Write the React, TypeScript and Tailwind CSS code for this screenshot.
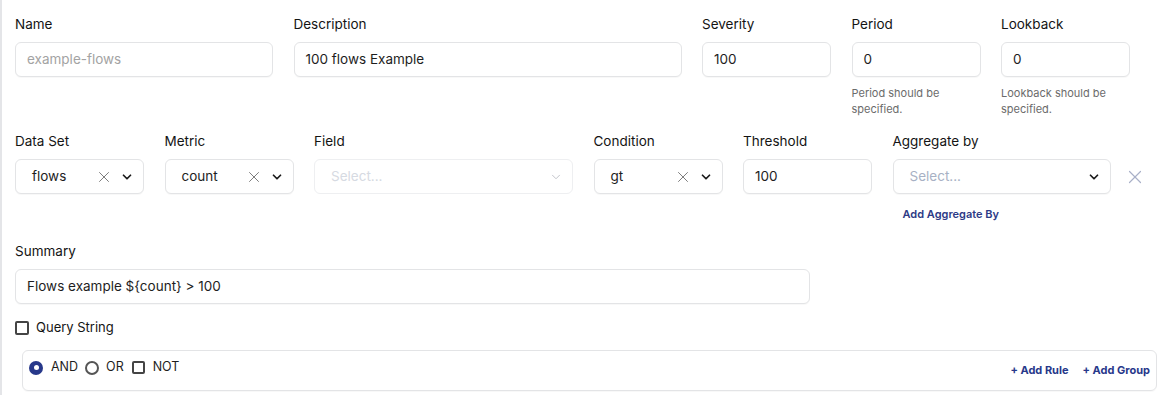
import { X, ChevronDown } from "lucide-react";

function Label({ children }: { children: React.ReactNode }) {
  return <div className="mb-2 h-5 text-[13.5px] leading-5 font-normal text-[#141414]">{children}</div>;
}

function TextInput({ value, placeholder, w }: { value?: string; placeholder?: string; w: string }) {
  return (
    <div className={`${w} flex h-[35px] items-center rounded-md border border-[#e3e4e6] bg-white px-[11px] text-[13.5px] shadow-[0_1px_1px_rgba(0,0,0,0.03)]`}>
      {value ? (
        <span className="text-[#1e1e1e]">{value}</span>
      ) : (
        <span className="text-[#a3a3a3]">{placeholder}</span>
      )}
    </div>
  );
}

function Select({ value, w, clearable = true, disabled = false }: { value?: string; w: string; clearable?: boolean; disabled?: boolean }) {
  return (
    <div
      className={`${w} flex h-[35px] items-center rounded-md border bg-white pl-4 pr-[9px] text-[13.5px] ${
        disabled ? "border-[#eeeff1]" : "border-[#e3e4e6] shadow-[0_1px_1px_rgba(0,0,0,0.03)]"
      }`}
    >
      <span className={`flex-1 ${value ? "text-[#1e1e1e]" : disabled ? "text-[#d6dae2]" : "text-[#a7b1c4]"}`}>
        {value ?? "Select..."}
      </span>
      {clearable && <X size={18} strokeWidth={1.3} className="mr-[7px] text-[#7a7a7a]" />}
      <ChevronDown
        size={14}
        strokeWidth={disabled ? 1.5 : 3}
        className={disabled ? "text-[#b9bcc2]" : "text-[#1a1a1a]"}
      />
    </div>
  );
}

export default function App() {
  return (
    <div className="h-[395px] w-[1161px] overflow-hidden border-l-2 border-[#e4e5e8] bg-white pl-[13px] pt-[14px] font-['Inter','Liberation_Sans',sans-serif]">
      {/* row 1 */}
      <div className="flex items-start gap-[20.5px]">
        <div>
          <Label>Name</Label>
          <TextInput w="w-[258px]" placeholder="example-flows" />
        </div>
        <div>
          <Label>Description</Label>
          <TextInput w="w-[388px]" value="100 flows Example" />
        </div>
        <div>
          <Label>Severity</Label>
          <TextInput w="w-[129px]" value="100" />
        </div>
        <div className="w-[129px]">
          <Label>Period</Label>
          <TextInput w="w-[129px]" value="0" />
          <p className="mt-[8px] text-[11px] leading-4 text-[#6b6b6b]">Period should be specified.</p>
        </div>
        <div className="w-[129px]">
          <Label>Lookback</Label>
          <TextInput w="w-[129px]" value="0" />
          <p className="mt-[8px] text-[11px] leading-4 text-[#6b6b6b]">Lookback should be specified.</p>
        </div>
      </div>

      {/* row 2 */}
      <div className="mt-[14px] flex items-start gap-[20.5px]">
        <div>
          <Label>Data Set</Label>
          <Select w="w-[129px]" value="flows" />
        </div>
        <div>
          <Label>Metric</Label>
          <Select w="w-[129px]" value="count" />
        </div>
        <div>
          <Label>Field</Label>
          <Select w="w-[259px]" clearable={false} disabled />
        </div>
        <div>
          <Label>Condition</Label>
          <Select w="w-[129px]" value="gt" />
        </div>
        <div>
          <Label>Threshold</Label>
          <TextInput w="w-[129px]" value="100" />
        </div>
        <div>
          <Label>Aggregate by</Label>
          <div className="flex items-center">
            <Select w="w-[218px]" clearable={false} />
            <X size={22} strokeWidth={1.3} className="ml-[13px] text-[#a9b0c8]" />
          </div>
          <div className="mt-[12px] pl-[10px] text-[11px] font-semibold leading-4 text-[#2d3a86]">Add Aggregate By</div>
        </div>
      </div>

      {/* summary */}
      <div className="mt-[19px]">
        <Label>Summary</Label>
        <TextInput w="w-[795px]" value="Flows example ${count} > 100" />
      </div>

      {/* query string */}
      <div className="mt-[14px] flex h-5 items-center gap-[7px]">
        <div className="h-[14px] w-[14px] rounded-[2px] border-2 border-[#444]" />
        <span className="text-[13px] text-[#141414]">Query String</span>
      </div>

      {/* query builder */}
      <div className="ml-[7px] mt-[12px] flex h-[41px] w-[1135px] items-center rounded-md border border-[#e3e4e6] pl-[6px] pr-[6px] shadow-[0_1px_1px_rgba(0,0,0,0.03)]">
        <div className="mb-[6px] flex flex-1 items-center text-[12.5px] text-[#1e1e1e]">
          <span className="flex h-[14px] w-[14px] items-center justify-center rounded-full bg-[#27388a]">
            <span className="h-[5px] w-[5px] rounded-full bg-white" />
          </span>
          <span className="ml-[8px]">AND</span>
          <span className="ml-[7px] h-[14px] w-[14px] rounded-full border-2 border-[#555]" />
          <span className="ml-[7px]">OR</span>
          <span className="ml-[8px] h-[13px] w-[13px] rounded-[2px] border-2 border-[#444]" />
          <span className="ml-[8px]">NOT</span>
        </div>
        <div className="flex gap-[14px] text-[11px] font-bold text-[#27388a]">
          <span>+ Add Rule</span>
          <span>+ Add Group</span>
        </div>
      </div>
    </div>
  );
}
